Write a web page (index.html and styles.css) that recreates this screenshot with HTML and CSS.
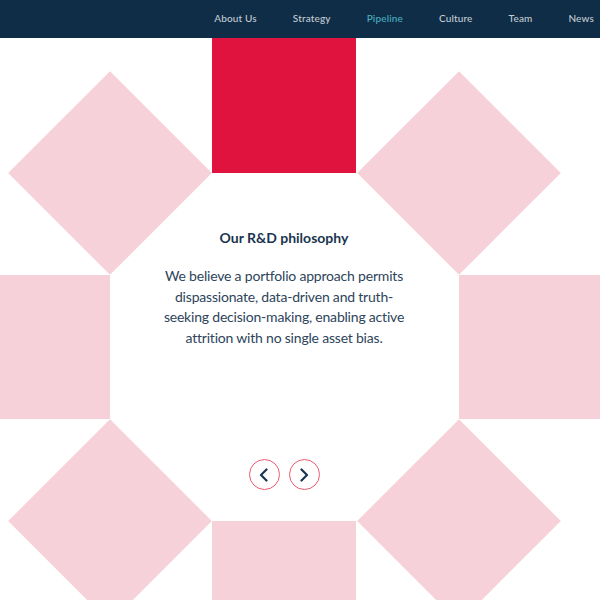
FILE: index.html
```html
<!DOCTYPE html>
<html lang="en">
<head>
<meta charset="utf-8">
<title>Our R&amp;D philosophy</title>
<link rel="stylesheet" href="styles.css">
</head>
<body>
<header class="topbar">
  <nav class="nav">
    <a class="nav-link" href="#">About Us</a>
    <a class="nav-link" href="#">Strategy</a>
    <a class="nav-link is-active" href="#">Pipeline</a>
    <a class="nav-link" href="#">Culture</a>
    <a class="nav-link" href="#">Team</a>
    <a class="nav-link" href="#">News</a>
  </nav>
</header>
<main class="stage">
  <div class="shape square top"></div>
  <div class="shape square left"></div>
  <div class="shape square right"></div>
  <div class="shape square bottom"></div>
  <div class="shape diamond d-tl"></div>
  <div class="shape diamond d-tr"></div>
  <div class="shape diamond d-bl"></div>
  <div class="shape diamond d-br"></div>

  <section class="content">
    <h2 class="title">Our R&amp;D philosophy</h2>
    <p class="text">We believe a portfolio approach permits dispassionate, data-driven and truth-seeking decision-making, enabling active attrition with no single asset bias.</p>
    <div class="controls">
      <button class="arrow" aria-label="Previous">
        <svg width="12" height="14" viewBox="0 0 12 14"><path d="M8.5 1.5 L3 7 L8.5 12.5" fill="none" stroke="#183650" stroke-width="2.2" stroke-linecap="round" stroke-linejoin="round"/></svg>
      </button>
      <button class="arrow" aria-label="Next">
        <svg width="12" height="14" viewBox="0 0 12 14"><path d="M3.5 1.5 L9 7 L3.5 12.5" fill="none" stroke="#183650" stroke-width="2.2" stroke-linecap="round" stroke-linejoin="round"/></svg>
      </button>
    </div>
  </section>
</main>
</body>
</html>
```
FILE: styles.css
```css
* { box-sizing: border-box; }
html, body { margin: 0; padding: 0; }
body {
  width: 600px;
  height: 600px;
  overflow: hidden;
  background: #ffffff;
  font-family: Lato, "Noto Sans", sans-serif;
}
.topbar {
  height: 38px;
  background: #0f2d47;
  position: relative;
  z-index: 2;
}
.nav {
  display: flex;
  justify-content: flex-end;
  align-items: center;
  height: 100%;
  gap: 36px;
  padding: 0 6px 2px 0;
}
.nav-link {
  color: #c3cbd3;
  text-decoration: none;
  font-size: 10px;
  font-weight: 500;
  letter-spacing: 0.15px;
}
.nav-link.is-active { color: #4aaec0; }

.stage {
  position: relative;
  height: 562px;
  overflow: hidden;
}
.shape { position: absolute; }
.square {
  width: 144px;
  height: 144px;
  background: #f7d1d9;
}
.square.top { left: 212px; top: -9px; background: #df133d; }
.square.bottom { left: 212px; top: 483px; }
.square.left { left: -34px; top: 237px; }
.square.right { left: 459px; top: 237px; }
.diamond {
  width: 144px;
  height: 144px;
  background: #f7d1d9;
  transform: rotate(45deg);
}
.d-tl { left: 38px; top: 63px; }
.d-tr { left: 387px; top: 63px; }
.d-bl { left: 38px; top: 411px; }
.d-br { left: 387px; top: 411px; }

.content {
  position: relative;
  z-index: 1;
  width: 250px;
  margin-left: 159px;
  padding-top: 190px;
  text-align: center;
  color: #1d3650;
}
.title {
  margin: 0;
  font-size: 14px;
  line-height: 20px;
  font-weight: 700;
  color: #1a3550;
}
.text {
  margin: 18px 0 0;
  font-size: 14px;
  line-height: 20.5px;
  letter-spacing: -0.2px;
  color: #2d445b;
}
.controls {
  display: flex;
  justify-content: center;
  gap: 9px;
  margin-top: 111px;
}
.arrow {
  width: 31px;
  height: 31px;
  border-radius: 50%;
  border: 1.5px solid #e95b73;
  background: #ffffff;
  padding: 0;
  display: flex;
  align-items: center;
  justify-content: center;
  cursor: pointer;
}
.arrow svg { display: block; }
```
